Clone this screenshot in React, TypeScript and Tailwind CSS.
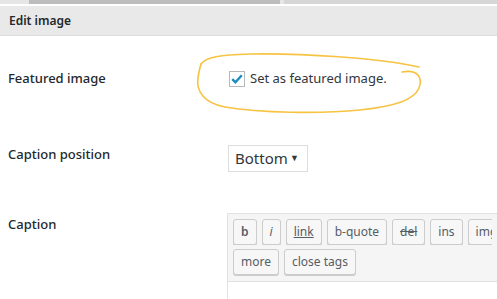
import React from 'react';

const toolbarRow1 = ['b', 'i', 'link', 'b-quote', 'del', 'ins', 'img'];
const toolbarRow2 = ['more', 'close tags'];

const QTagButton: React.FC<{ label: string }> = ({ label }) => {
  let extra = '';
  if (label === 'b') extra = 'font-semibold';
  if (label === 'i') extra = 'italic';
  if (label === 'link') extra = 'underline';
  if (label === 'del') extra = 'line-through';
  return (
    <button className="h-[26px] px-[7px] shrink-0 bg-[#f7f7f7] border border-[#cccccc] rounded-[3px] shadow-[0_1px_0_#cccccc] text-[12px] text-[#555d66] leading-none">
      <span className={extra}>{label}</span>
    </button>
  );
};

const App: React.FC = () => {
  return (
    <div
      className="relative w-[497px] h-[299px] overflow-hidden bg-white text-[#23282d]"
      style={{ fontFamily: '"Noto Sans", "Open Sans", sans-serif' }}
    >
      {/* top strip */}
      <div className="flex h-[4px]">
        <div className="w-[29px] bg-[#e6e6e6]" />
        <div className="w-[251px] bg-[#bdbdbd]" />
        <div className="w-[4px] bg-[#e6e6e6]" />
        <div className="flex-1 bg-[#d6d6d6]" />
      </div>
      <div className="h-[2px] bg-white" />

      {/* header */}
      <div className="h-[30px] bg-[#e9e9e9] border-b border-[#dcdcdc] flex items-center pl-[9px]">
        <span className="text-[12px] font-semibold text-[#23282d]">Edit image</span>
      </div>

      {/* featured image row */}
      <div className="flex items-center pt-[33px]">
        <div className="w-[229px] shrink-0 pl-[8px] text-[13px] font-medium">Featured image</div>
        <label className="flex items-center gap-[5px] text-[13px] text-[#32373c]">
          <span className="w-[16px] h-[16px] border border-[#b4b9be] bg-white flex items-center justify-center">
            <svg width="14" height="14" viewBox="0 0 14 14">
              <path d="M2.2 7.2 L5.4 10.2 L11.8 3.2" fill="none" stroke="#1e8cbe" strokeWidth="2.4" />
            </svg>
          </span>
          Set as featured image.
        </label>
      </div>

      {/* caption position row */}
      <div className="flex items-start pt-[55px]">
        <div className="w-[228px] shrink-0 pl-[8px] pt-[1px] text-[13px] font-medium">Caption position</div>
        <div className="mt-[1px] h-[27px] w-[80px] border border-[#dddddd] bg-white flex items-center justify-between pl-[6px] pr-[8px] text-[15px] text-[#32373c]">
          <span>Bottom</span>
          <span className="text-[9px]">▼</span>
        </div>
      </div>

      {/* caption row */}
      <div className="flex items-start pt-[41px]">
        <div className="w-[227px] shrink-0 pl-[8px] pt-[2px] text-[13px] font-medium">Caption</div>
        <div className="flex-1 min-w-0">
          <div className="bg-[#f5f5f5] border border-[#e2e2e2] border-r-0 px-[5px] pt-[5px] pb-[6px] flex flex-col gap-[4px]">
            <div className="flex gap-[5px] overflow-hidden">
              {toolbarRow1.map((t) => (
                <QTagButton key={t} label={t} />
              ))}
            </div>
            <div className="flex gap-[5px]">
              {toolbarRow2.map((t) => (
                <QTagButton key={t} label={t} />
              ))}
            </div>
          </div>
          <div className="h-[40px] border-l border-[#e2e2e2] bg-white" />
        </div>
      </div>

      {/* hand-drawn highlight */}
      <svg className="absolute left-0 top-0 pointer-events-none" width="497" height="299">
        <path
          d="M201 64 C 206 57, 220 55, 250 54 C 300 53, 380 58, 419 67"
          fill="none"
          stroke="#f6c343"
          strokeWidth="1.6"
          strokeLinecap="round"
        />
        <path
          d="M402 72 C 418 69, 423 78, 419 88 C 414 100, 396 106, 360 110 C 320 114, 260 113, 225 107 C 203 103, 196 90, 198 78 C 199 71, 200 67, 201 64"
          fill="none"
          stroke="#f6c343"
          strokeWidth="1.6"
          strokeLinecap="round"
        />
      </svg>
    </div>
  );
};

export default App;
